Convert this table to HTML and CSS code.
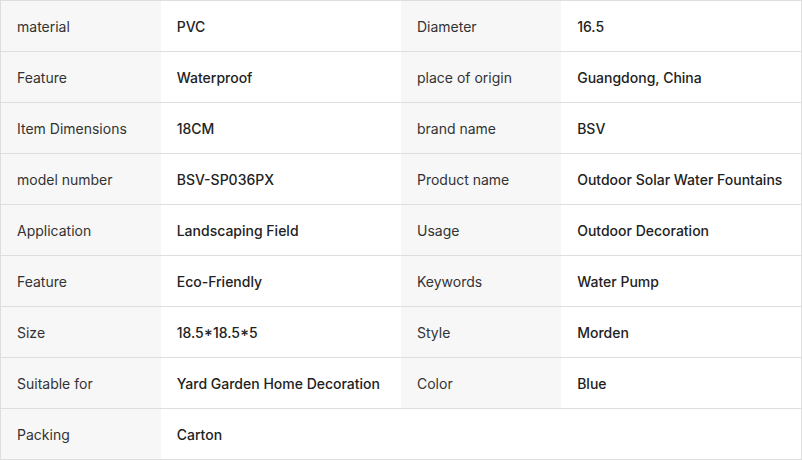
FILE: index.html
```html
<!DOCTYPE html>
<html>
<head>
<meta charset="utf-8">
<link rel="stylesheet" href="styles.css">
</head>
<body>
<table class="spec">
  <colgroup><col class="c-label"><col class="c-value"><col class="c-label"><col class="c-value"></colgroup>
  <tbody>
    <tr><td class="label">material</td><td class="value">PVC</td><td class="label">Diameter</td><td class="value">16.5</td></tr>
    <tr><td class="label">Feature</td><td class="value">Waterproof</td><td class="label">place of origin</td><td class="value">Guangdong, China</td></tr>
    <tr><td class="label">Item Dimensions</td><td class="value">18CM</td><td class="label">brand name</td><td class="value">BSV</td></tr>
    <tr><td class="label">model number</td><td class="value">BSV-SP036PX</td><td class="label">Product name</td><td class="value">Outdoor Solar Water Fountains</td></tr>
    <tr><td class="label">Application</td><td class="value">Landscaping Field</td><td class="label">Usage</td><td class="value">Outdoor Decoration</td></tr>
    <tr><td class="label">Feature</td><td class="value">Eco-Friendly</td><td class="label">Keywords</td><td class="value">Water Pump</td></tr>
    <tr><td class="label">Size</td><td class="value">18.5*18.5*5</td><td class="label">Style</td><td class="value">Morden</td></tr>
    <tr><td class="label">Suitable for</td><td class="value">Yard Garden Home Decoration</td><td class="label">Color</td><td class="value">Blue</td></tr>
    <tr><td class="label">Packing</td><td class="value">Carton</td><td class="empty"></td><td class="empty"></td></tr>
  </tbody>
</table>
</body>
</html>
```

FILE: styles.css
```css
html, body {
  margin: 0;
  padding: 0;
  background: #fff;
}
.spec {
  width: 802px;
  border-collapse: collapse;
  table-layout: fixed;
  border: 1px solid #dedede;
  font-family: Inter, "Noto Sans", sans-serif;
  font-size: 14px;
}
.c-label { width: 160px; }
.c-value { width: 240px; }
.spec tr {
  border-bottom: 1px solid #dedede;
}
.spec td {
  height: 51px;
  padding: 0 16px;
  box-sizing: border-box;
  vertical-align: middle;
  white-space: nowrap;
}
.label {
  background: #f7f7f7;
  color: #333;
  font-weight: 400;
}
.value {
  background: #fff;
  color: #222;
  font-weight: 500;
}
.empty {
  background: #fff;
}
```
